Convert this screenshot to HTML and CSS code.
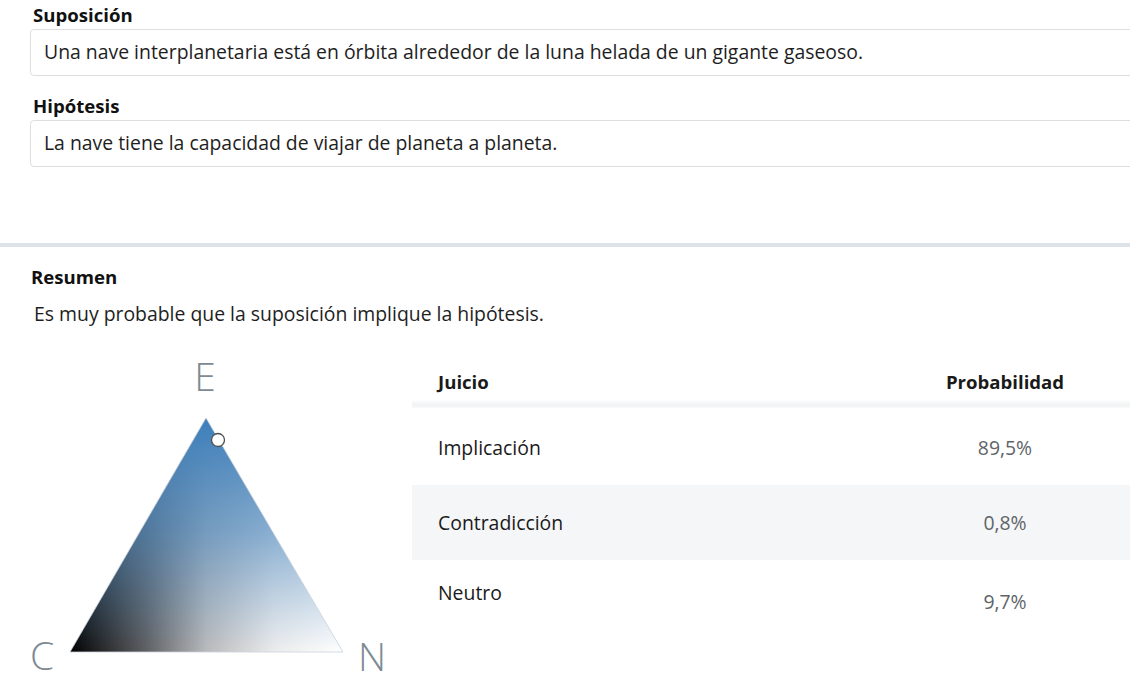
FILE: index.html
```html
<!DOCTYPE html>
<html lang="es">
<head>
<meta charset="utf-8">
<link rel="stylesheet" href="styles.css">
</head>
<body>
<section class="inputs">
  <div class="field">
    <div class="field-label">Suposición</div>
    <div class="field-box">Una nave interplanetaria está en órbita alrededor de la luna helada de un gigante gaseoso.</div>
  </div>
  <div class="field">
    <div class="field-label">Hipótesis</div>
    <div class="field-box">La nave tiene la capacidad de viajar de planeta a planeta.</div>
  </div>
</section>
<div class="separator"></div>
<section class="summary">
  <div class="summary-title">Resumen</div>
  <div class="summary-text">Es muy probable que la suposición implique la hipótesis.</div>
  <div class="result">
    <div class="chart">
      <svg width="412" height="343" viewBox="0 0 412 343">
        <defs>
          <linearGradient id="base" x1="70" y1="0" x2="343" y2="0" gradientUnits="userSpaceOnUse">
            <stop offset="0" stop-color="#000"/>
            <stop offset="0.28" stop-color="#5f6063"/>
            <stop offset="0.5" stop-color="#b9babc"/>
            <stop offset="0.75" stop-color="#ececed"/>
            <stop offset="1" stop-color="#fff"/>
          </linearGradient>
          <linearGradient id="top" x1="206" y1="77" x2="206" y2="311" gradientUnits="userSpaceOnUse">
            <stop offset="0" stop-color="#3d7fbb" stop-opacity="1"/>
            <stop offset="0.5" stop-color="#4a88c0" stop-opacity="0.6"/>
            <stop offset="1" stop-color="#5a92c4" stop-opacity="0"/>
          </linearGradient>
        </defs>
        <text class="vtx" x="205" y="50" text-anchor="middle">E</text>
        <text class="vtx" x="42" y="329" text-anchor="middle">C</text>
        <text class="vtx" x="372" y="330" text-anchor="middle">N</text>
        <polygon points="206,77 70,311 343,311" fill="url(#base)"/>
        <polygon points="206,77 70,311 343,311" fill="url(#top)" stroke="#c9d2da" stroke-width="0.8"/>
        <circle cx="218" cy="99" r="6.5" fill="#fff" stroke="#4d4d4d" stroke-width="1.3"/>
      </svg>
    </div>
    <div class="table">
      <div class="row head">
        <div class="cell">Juicio</div>
        <div class="cell num">Probabilidad</div>
      </div>
      <div class="row r1">
        <div class="cell">Implicación</div>
        <div class="cell num val">89,5%</div>
      </div>
      <div class="row r2">
        <div class="cell">Contradicción</div>
        <div class="cell num val">0,8%</div>
      </div>
      <div class="row r3">
        <div class="cell">Neutro</div>
        <div class="cell num val low">9,7%</div>
      </div>
    </div>
  </div>
</section>
</body>
</html>
```

FILE: styles.css
```css
html, body {
  margin: 0;
  padding: 0;
  background: #fff;
  overflow: hidden;
}
body {
  width: 1130px;
  height: 683px;
  font-family: "Open Sans", "Noto Sans", sans-serif;
  color: #1a1a1a;
  font-size: 19.4px;
}
.inputs {
  padding: 2px 0 0 30px;
  height: 243px;
  box-sizing: border-box;
}
.field-label {
  font-weight: 700;
  font-size: 18.6px;
  padding-left: 3px;
  height: 27px;
  line-height: 26px;
  color: #111;
}
.field-box {
  border: 1px solid #dedede;
  border-radius: 4px;
  margin-right: -12px;
  height: 45px;
  line-height: 44px;
  padding-left: 13px;
  color: #1e1e1e;
  margin-bottom: 17px;
}
.separator {
  height: 4px;
  background: #dde3e9;
}
.summary {
  padding-top: 18px;
}
.summary-title {
  font-weight: 700;
  font-size: 18.6px;
  padding-left: 31px;
  line-height: 24px;
  color: #111;
}
.summary-text {
  padding-left: 34px;
  padding-top: 12px;
  line-height: 26px;
  color: #1e1e1e;
}
.result {
  display: flex;
  margin-top: 13px;
}
.chart {
  width: 412px;
  flex: none;
  margin-top: 1px;
}
.chart svg {
  display: block;
}
.vtx {
  font-family: "Open Sans", "Noto Sans", sans-serif;
  font-weight: 300;
  font-size: 39px;
  fill: #7d8a93;
}
.table {
  flex: 1;
  padding-top: 22px;
}
.row {
  display: grid;
  grid-template-columns: 1fr 250px;
  align-items: center;
}
.cell {
  padding-left: 26px;
}
.num {
  padding-left: 0;
  text-align: center;
}
.head {
  font-weight: 700;
  font-size: 18.6px;
  height: 46px;
  box-sizing: border-box;
  align-items: start;
  line-height: 24px;
  padding-top: 8px;
  background: linear-gradient(to bottom, #fff 0, #fff 38px, #f7f8f9 40px, #f1f2f3 43px, #fafafa 46px);
}
.r1 {
  height: 77px;
  padding-top: 2px;
  box-sizing: border-box;
}
.r2 {
  height: 75px;
  background: #f5f6f7;
}
.r3 {
  height: 75px;
  align-items: start;
  padding-top: 19px;
  box-sizing: border-box;
}
.r3 .low {
  padding-top: 9px;
}
.val {
  color: #5f6469;
}
```
